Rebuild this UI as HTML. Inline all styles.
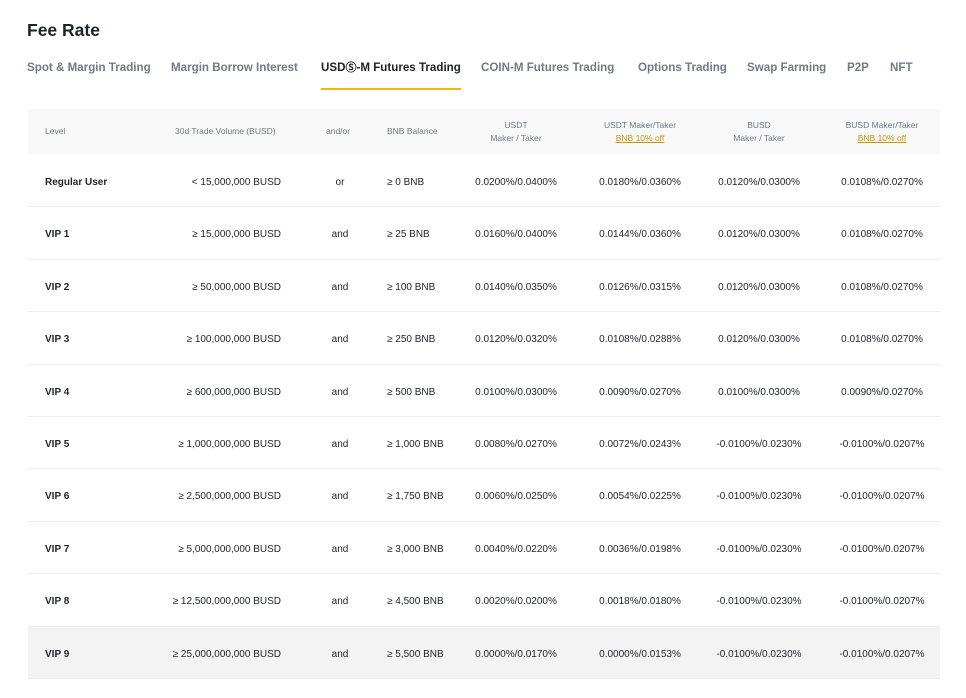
<!DOCTYPE html>
<html><head><meta charset="utf-8"><style>
*{margin:0;padding:0;box-sizing:border-box}
body{width:966px;height:698px;background:#fff;font-family:"Liberation Sans",sans-serif;color:#1e2329;position:relative;overflow:hidden}
h1{position:absolute;left:27px;top:20px;font-size:17.5px;font-weight:bold;color:#1e2329}
.tab{position:absolute;top:60px;height:16px;line-height:16px;font-size:11.6px;color:#707a8a;font-weight:bold;white-space:nowrap;overflow:visible}
.tab.on{color:#1e2329}
.tab .s{font-size:11px;line-height:16px;display:inline-block;vertical-align:top}
.ul{position:absolute;left:321px;top:88px;width:140px;height:2px;background:#f0b90b}
.hd{position:absolute;left:28px;top:109px;width:912px;height:45px;background:#f8f8f8}
.h{position:absolute;font-size:8.5px;color:#707a8a;line-height:13px;text-align:center;white-space:nowrap}
.h u{color:#c99400}
.row{position:absolute;left:28px;width:912px;height:52.4px;border-bottom:1px solid #eeeeee}
.row span{position:absolute;top:2px;line-height:52px;font-size:10px;white-space:nowrap;color:#1e2329}
.lv{left:17px;font-weight:bold}
.vol{right:659px}
.ao{left:312px;width:0;display:flex;justify-content:center}
.bnb{left:359px}
.c{width:0;display:flex;justify-content:center}
</style></head><body>
<h1>Fee Rate</h1>
<div class="tab" style="left:27px">Spot &amp; Margin Trading</div>
<div class="tab" style="left:171px">Margin Borrow Interest</div>
<div class="tab on" style="left:321px">USD<span class="s">Ⓢ</span>-M Futures Trading</div>
<div class="tab" style="left:481px">COIN-M Futures Trading</div>
<div class="tab" style="left:638px">Options Trading</div>
<div class="tab" style="left:747px">Swap Farming</div>
<div class="tab" style="left:847px">P2P</div>
<div class="tab" style="left:890px">NFT</div>
<div class="ul"></div>
<div class="hd"></div>
<div class="h" style="left:45px;top:125px">Level</div>
<div class="h" style="left:175px;top:125px">30d Trade Volume (BUSD)</div>
<div class="h" style="left:326px;top:125px">and/or</div>
<div class="h" style="left:387px;top:125px">BNB Balance</div>
<div class="h" style="left:466px;width:100px;top:119px">USDT<br>Maker / Taker</div>
<div class="h" style="left:588px;width:104px;top:119px">USDT Maker/Taker<br><u>BNB 10% off</u></div>
<div class="h" style="left:709px;width:100px;top:119px">BUSD<br>Maker / Taker</div>
<div class="h" style="left:830px;width:104px;top:119px">BUSD Maker/Taker<br><u>BNB 10% off</u></div>
<div class="row" style="top:155px"><span class="lv">Regular User</span><span class="vol">&lt; 15,000,000 BUSD</span><span class="ao">or</span><span class="bnb">≥ 0 BNB</span><span class="c" style="left:488px">0.0200%/0.0400%</span><span class="c" style="left:612px">0.0180%/0.0360%</span><span class="c" style="left:731px">0.0120%/0.0300%</span><span class="c" style="left:854px">0.0108%/0.0270%</span></div>
<div class="row" style="top:207.4px"><span class="lv">VIP 1</span><span class="vol">≥ 15,000,000 BUSD</span><span class="ao">and</span><span class="bnb">≥ 25 BNB</span><span class="c" style="left:488px">0.0160%/0.0400%</span><span class="c" style="left:612px">0.0144%/0.0360%</span><span class="c" style="left:731px">0.0120%/0.0300%</span><span class="c" style="left:854px">0.0108%/0.0270%</span></div>
<div class="row" style="top:259.8px"><span class="lv">VIP 2</span><span class="vol">≥ 50,000,000 BUSD</span><span class="ao">and</span><span class="bnb">≥ 100 BNB</span><span class="c" style="left:488px">0.0140%/0.0350%</span><span class="c" style="left:612px">0.0126%/0.0315%</span><span class="c" style="left:731px">0.0120%/0.0300%</span><span class="c" style="left:854px">0.0108%/0.0270%</span></div>
<div class="row" style="top:312.2px"><span class="lv">VIP 3</span><span class="vol">≥ 100,000,000 BUSD</span><span class="ao">and</span><span class="bnb">≥ 250 BNB</span><span class="c" style="left:488px">0.0120%/0.0320%</span><span class="c" style="left:612px">0.0108%/0.0288%</span><span class="c" style="left:731px">0.0120%/0.0300%</span><span class="c" style="left:854px">0.0108%/0.0270%</span></div>
<div class="row" style="top:364.6px"><span class="lv">VIP 4</span><span class="vol">≥ 600,000,000 BUSD</span><span class="ao">and</span><span class="bnb">≥ 500 BNB</span><span class="c" style="left:488px">0.0100%/0.0300%</span><span class="c" style="left:612px">0.0090%/0.0270%</span><span class="c" style="left:731px">0.0100%/0.0300%</span><span class="c" style="left:854px">0.0090%/0.0270%</span></div>
<div class="row" style="top:417px"><span class="lv">VIP 5</span><span class="vol">≥ 1,000,000,000 BUSD</span><span class="ao">and</span><span class="bnb">≥ 1,000 BNB</span><span class="c" style="left:488px">0.0080%/0.0270%</span><span class="c" style="left:612px">0.0072%/0.0243%</span><span class="c" style="left:731px">-0.0100%/0.0230%</span><span class="c" style="left:854px">-0.0100%/0.0207%</span></div>
<div class="row" style="top:469.4px"><span class="lv">VIP 6</span><span class="vol">≥ 2,500,000,000 BUSD</span><span class="ao">and</span><span class="bnb">≥ 1,750 BNB</span><span class="c" style="left:488px">0.0060%/0.0250%</span><span class="c" style="left:612px">0.0054%/0.0225%</span><span class="c" style="left:731px">-0.0100%/0.0230%</span><span class="c" style="left:854px">-0.0100%/0.0207%</span></div>
<div class="row" style="top:521.8px"><span class="lv">VIP 7</span><span class="vol">≥ 5,000,000,000 BUSD</span><span class="ao">and</span><span class="bnb">≥ 3,000 BNB</span><span class="c" style="left:488px">0.0040%/0.0220%</span><span class="c" style="left:612px">0.0036%/0.0198%</span><span class="c" style="left:731px">-0.0100%/0.0230%</span><span class="c" style="left:854px">-0.0100%/0.0207%</span></div>
<div class="row" style="top:574.2px"><span class="lv">VIP 8</span><span class="vol">≥ 12,500,000,000 BUSD</span><span class="ao">and</span><span class="bnb">≥ 4,500 BNB</span><span class="c" style="left:488px">0.0020%/0.0200%</span><span class="c" style="left:612px">0.0018%/0.0180%</span><span class="c" style="left:731px">-0.0100%/0.0230%</span><span class="c" style="left:854px">-0.0100%/0.0207%</span></div>
<div class="row" style="top:626.6px;background:#f3f3f3"><span class="lv">VIP 9</span><span class="vol">≥ 25,000,000,000 BUSD</span><span class="ao">and</span><span class="bnb">≥ 5,500 BNB</span><span class="c" style="left:488px">0.0000%/0.0170%</span><span class="c" style="left:612px">0.0000%/0.0153%</span><span class="c" style="left:731px">-0.0100%/0.0230%</span><span class="c" style="left:854px">-0.0100%/0.0207%</span></div>
</body></html>
